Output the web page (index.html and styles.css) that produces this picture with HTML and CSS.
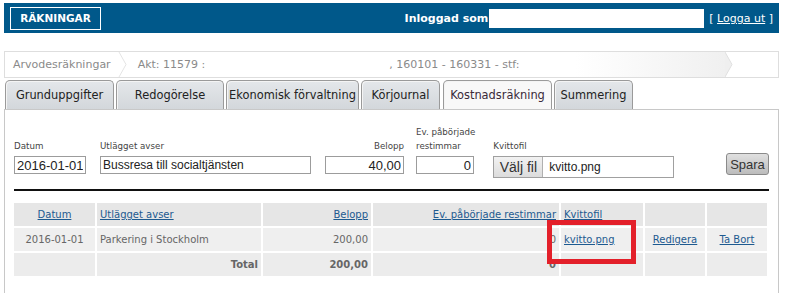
FILE: index.html
```html
<!DOCTYPE html>
<html lang="sv">
<head>
  <meta charset="UTF-8" />
  <title>Kostnadsräkning</title>
  <link rel="stylesheet" href="styles.css">
</head>
<body>
  <div class="page">
    <div class="topbar">
      <a class="topbtn" href="#">RÄKNINGAR</a>
      <div class="user">
        <span class="user-label">Inloggad som</span>
        <span class="user-name"></span>
        <span class="logout">[ <a href="#">Logga ut</a> ]</span>
      </div>
    </div>

    <div class="crumbs">
      <span class="crumb">Arvodesräkningar</span>
      <svg class="sep" width="10" height="25" viewBox="0 0 10 25"><path d="M1 0 L8 12.5 L1 25" fill="none" stroke="#e4e4e4" stroke-width="1"/></svg>
      <span class="crumb crumb-current">Akt: 11579 :<span class="period">, 160101 - 160331 - stf:</span></span>
      <svg class="tip" width="8" height="25" viewBox="0 0 8 25"><path d="M0 0 L7 12.5 L0 25 Z" fill="#efefef"/><path d="M0 0 L7 12.5 L0 25" fill="none" stroke="#e0e0e0"/></svg>
    </div>

    <ul class="tabs">
      <li class="tab t1">Grunduppgifter</li>
      <li class="tab t2">Redogörelse</li>
      <li class="tab t3">Ekonomisk förvaltning</li>
      <li class="tab t4">Körjournal</li>
      <li class="tab t5 active">Kostnadsräkning</li>
      <li class="tab t6">Summering</li>
    </ul>

    <div class="panel">
      <form class="entry">
        <div class="field f-date">
          <label>Datum</label>
          <input type="text" value="2016-01-01">
        </div>
        <div class="field f-desc">
          <label>Utlägget avser</label>
          <input type="text" value="Bussresa till socialtjänsten">
        </div>
        <div class="field f-amount">
          <label class="right">Belopp</label>
          <input type="text" class="num" value="40,00">
        </div>
        <div class="field f-hours">
          <label>Ev. påbörjade<br>restimmar</label>
          <input type="text" class="num" value="0">
        </div>
        <div class="field f-file">
          <label>Kvittofil</label>
          <div class="filebox"><span class="filebtn">Välj fil</span><span class="filename">kvitto.png</span></div>
        </div>
        <button type="button" class="save">Spara</button>
      </form>

      <div class="rule"></div>

      <table class="list">
        <colgroup>
          <col style="width:81px"><col style="width:164px"><col style="width:108px"><col style="width:186px"><col style="width:82px"><col style="width:60px"><col style="width:60px">
        </colgroup>
        <tr class="head">
          <td class="c"><a href="#">Datum</a></td>
          <td><a href="#">Utlägget avser</a></td>
          <td class="r"><a href="#">Belopp</a></td>
          <td class="r"><a href="#">Ev. påbörjade restimmar</a></td>
          <td><a href="#">Kvittofil</a></td>
          <td></td>
          <td></td>
        </tr>
        <tr>
          <td class="c">2016-01-01</td>
          <td>Parkering i Stockholm</td>
          <td class="r">200,00</td>
          <td class="r">0</td>
          <td><a href="#">kvitto.png</a></td>
          <td class="c"><a href="#">Redigera</a></td>
          <td class="c"><a href="#">Ta Bort</a></td>
        </tr>
        <tr class="total">
          <td></td>
          <td class="r">Total</td>
          <td class="r">200,00</td>
          <td class="r">0</td>
          <td></td>
          <td></td>
          <td></td>
        </tr>
      </table>

      <div class="highlight"></div>
    </div>
  </div>
</body>
</html>
```

FILE: styles.css
```css
body {
  margin: 0;
  background: #fff;
  font-family: "DejaVu Sans", Verdana, sans-serif;
  font-size: 11px;
  color: #333;
}
.page {
  width: 775px;
  margin: 3px 0 0 4px;
}

/* toppen */
.topbar {
  height: 30px;
  background: #00588a;
  display: flex;
  align-items: center;
  padding: 0 6px;
  box-sizing: border-box;
}
.topbtn {
  display: inline-block;
  width: 91px;
  height: 23px;
  line-height: 21px;
  box-sizing: border-box;
  border: 1px solid #fff;
  color: #fff;
  font-weight: bold;
  font-size: 10.5px;
  text-align: center;
  text-decoration: none;
}
.user {
  margin-left: auto;
  display: flex;
  align-items: center;
  color: #fff;
}
.user-label {
  font-weight: bold;
  margin-right: 1px;
}
.user-name {
  display: inline-block;
  width: 215px;
  height: 19px;
  background: #fff;
}
.logout {
  margin-left: 5px;
}
.logout a {
  color: #fff;
}

/* brödsmulor */
.crumbs {
  margin-top: 18px;
  height: 27px;
  box-sizing: border-box;
  border: 1px solid #dedede;
  display: flex;
  align-items: stretch;
  color: #8a8a8a;
  font-size: 11px;
}
.crumb {
  display: flex;
  align-items: center;
  padding-left: 8px;
}
.sep {
  margin-left: 7px;
}
.crumb-current {
  padding-left: 10px;
  width: 587px;
  background: linear-gradient(to right, #fff 0%, #fff 75%, #f0f0f0 100%);
}
.period {
  margin-left: 184px;
}

/* flikar */
.tabs {
  list-style: none;
  margin: 2px 0 0 0;
  padding: 0 0 0 1px;
  display: flex;
  gap: 2px;
  height: 29px;
}
.tab {
  box-sizing: border-box;
  height: 29px;
  border: 1px solid #9a9a9a;
  border-bottom: none;
  border-radius: 5px 5px 0 0;
  background: linear-gradient(#e4e7ea, #d3d7db);
  box-shadow: inset 1px 1px 0 #f4f4f4;
  display: flex;
  align-items: center;
  justify-content: center;
  font-size: 11.4px;
  color: #222;
}
.tab.active {
  background: #f8f8f8;
  color: #3a2a3a;
}
.t1 { width: 109px; }
.t2 { width: 108px; }
.t3 { width: 133px; }
.t4 { width: 79px; }
.t5 { width: 109px; margin-left: 1px; }
.t6 { width: 79px; }

/* innehåll */
.panel {
  position: relative;
  border: 1px solid #c8c8c8;
  border-bottom: none;
  height: 168px;
  padding: 15px 9px 0 9px;
}
.entry {
  display: flex;
  align-items: flex-start;
}
.field {
  display: flex;
  flex-direction: column;
  margin-right: 14px;
}
.field label {
  height: 28px;
  display: flex;
  align-items: flex-end;
  font-size: 8.7px;
  line-height: 14px;
  color: #444;
  margin-bottom: 3px;
}
.field label.right {
  justify-content: flex-end;
}
.field input {
  box-sizing: border-box;
  height: 18px;
  border: 1px solid #9c9c9c;
  padding: 0 2px;
  font-family: "Liberation Sans", Arial, sans-serif;
  font-size: 13px;
  color: #222;
}
.field input.num {
  text-align: right;
}
.f-date input { width: 72px; }
.f-desc input { width: 211px; font-size: 12px; }
.f-amount { margin-right: 12px; }
.f-amount input { width: 79px; }
.f-hours { margin-right: 18px; }
.f-hours input { width: 58px; }
.filebox {
  box-sizing: border-box;
  width: 181px;
  height: 22px;
  border: 1px solid #a0a0a0;
  display: flex;
  font-family: "Liberation Sans", Arial, sans-serif;
  font-size: 12px;
}
.filebtn {
  width: 48px;
  background: linear-gradient(#f2f2f2, #dcdcdc);
  border-right: 1px solid #b0b0b0;
  display: flex;
  align-items: center;
  justify-content: center;
  font-size: 14px;
  color: #333;
}
.filename {
  display: flex;
  align-items: center;
  padding-left: 6px;
  color: #222;
}
.save {
  margin: 28px 0 0 auto;
  width: 43px;
  height: 22px;
  padding: 0;
  border: 1px solid #8a8a8a;
  border-radius: 3px;
  background: linear-gradient(#e0e0e0, #bcbcbc);
  font-family: "Liberation Sans", Arial, sans-serif;
  font-size: 13px;
  color: #333;
}
.rule {
  margin-top: 11px;
  border-top: 2px solid #111;
}

/* tabell */
.list {
  margin: 10px 0 0 -2px;
  border-collapse: separate;
  border-spacing: 2px;
  table-layout: fixed;
  font-size: 10px;
  color: #666;
}
.list td {
  height: 23px;
  padding: 0 3px;
  background: #efefef;
  white-space: nowrap;
  overflow: visible;
}
.list tr.head td {
  background: #e6e6e6;
}
.list tr.total td {
  background: #ececec;
  font-weight: bold;
}
.list .c { text-align: center; }
.list .r { text-align: right; }
.list a {
  color: #1d5a90;
}

.highlight {
  position: absolute;
  left: 542px;
  top: 110px;
  width: 89px;
  height: 44px;
  box-sizing: border-box;
  border: 5px solid #e3202a;
}
```
